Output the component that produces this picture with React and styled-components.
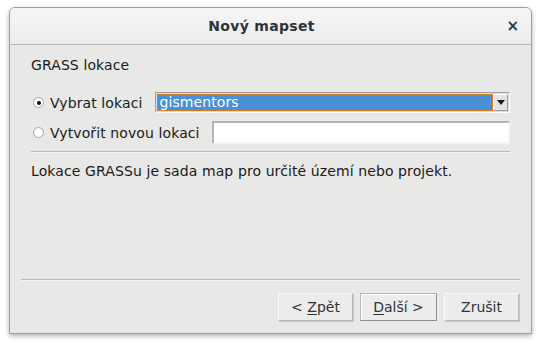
import React from "react";
import styled, { createGlobalStyle } from "styled-components";

const Global = createGlobalStyle`
  html, body {
    margin: 0;
    padding: 0;
    background: #ffffff;
  }
  body {
    font-family: "DejaVu Sans", "Liberation Sans", sans-serif;
    font-size: 14px;
    color: #2e3436;
  }
`;

const Page = styled.div`
  width: 542px;
  height: 344px;
  padding: 7px 0 0 9px;
  box-sizing: border-box;
`;

const Window = styled.div`
  width: 523px;
  height: 327px;
  box-sizing: border-box;
  border: 1px solid #9e9e9e;
  border-radius: 6px 6px 0 0;
  background: #e8e8e7;
  box-shadow: 0 2px 5px rgba(0, 0, 0, 0.3);
  display: flex;
  flex-direction: column;
  overflow: hidden;
`;

const TitleBar = styled.div`
  height: 36px;
  flex: none;
  display: flex;
  align-items: center;
  justify-content: center;
  position: relative;
  background: linear-gradient(#f6f6f6, #ececec);
  border-bottom: 1px solid #b6b6b3;
`;

const Title = styled.div`
  font-weight: bold;
  font-size: 14px;
  color: #2e3436;
  letter-spacing: 0.3px;
  margin-right: 18px;
`;

const Close = styled.div`
  position: absolute;
  right: 12px;
  top: 10px;
  font-size: 15px;
  font-weight: bold;
  color: #2e3436;
  line-height: 16px;
`;

const Body = styled.div`
  flex: 1;
  display: flex;
  flex-direction: column;
`;

const Content = styled.div`
  flex: 1;
  padding: 12px 21px 0 21px;
  display: flex;
  flex-direction: column;
  letter-spacing: 0.1px;
`;

const Heading = styled.div`
  line-height: 16px;
  color: #1a1a1a;
`;

const Options = styled.div`
  margin-top: 19px;
  padding-left: 2px;
  display: flex;
  flex-direction: column;
  gap: 8px;
`;

const OptionRow = styled.div`
  display: flex;
  align-items: center;
`;

const RadioLabel = styled.label`
  display: flex;
  align-items: center;
  gap: 6px;
  margin-right: ${(p) => p.$gap}px;
  color: #1a1a1a;
  white-space: nowrap;
`;

const Radio = styled.span`
  width: 9px;
  height: 9px;
  border-radius: 50%;
  border: 1px solid #a5a5a5;
  background: #ffffff;
  display: flex;
  align-items: center;
  justify-content: center;

  &::after {
    content: "";
    width: 4px;
    height: 4px;
    border-radius: 50%;
    background: ${(p) => (p.$checked ? "#111" : "transparent")};
  }
`;

const Combo = styled.div`
  flex: 1;
  height: 21px;
  box-sizing: border-box;
  border: 1px solid;
  border-color: #a0a0a0 #ffffff #ffffff #a0a0a0;
  background: #dcdcdc;
  display: flex;
  padding: 1px;
`;

const ComboValue = styled.div`
  flex: 1;
  background: #4a90d9;
  color: #ffffff;
  outline: 1px dotted #e08a2c;
  outline-offset: -1px;
  line-height: 17px;
  padding-left: 2px;
`;

const ComboButton = styled.div`
  width: 15px;
  box-sizing: border-box;
  border: 1px solid;
  border-color: #ffffff #9a9a9a #9a9a9a #ffffff;
  background: #e4e4e4;
  display: flex;
  align-items: center;
  justify-content: center;
`;

const Entry = styled.div`
  flex: 1;
  height: 23px;
  box-sizing: border-box;
  border: 2px solid;
  border-color: #b4b4b4 #f4f4f4 #f4f4f4 #b4b4b4;
  background: #ffffff;
`;

const Separator = styled.div`
  height: 1px;
  background: #b9b9b9;
  border-bottom: 1px solid #f6f6f6;
  margin: ${(p) => p.$margin};
`;

const Description = styled.div`
  line-height: 16px;
  color: #1a1a1a;
`;

const Footer = styled.div`
  flex: none;
  padding: 0 11px 12px 11px;
`;

const Buttons = styled.div`
  display: flex;
  justify-content: flex-end;
  gap: 7px;
  padding-right: 1px;
`;

const Button = styled.button`
  font-family: inherit;
  font-size: 14px;
  color: #2e3436;
  height: 28px;
  min-width: ${(p) => p.$width}px;
  box-sizing: border-box;
  background: #ececec;
  border: 1px solid;
  border-color: ${(p) =>
    p.$default ? "#b8b8b8 #8e8e8e #8e8e8e #b8b8b8" : "#fafafa #b9b9b9 #b9b9b9 #fafafa"};
  box-shadow: ${(p) => (p.$default ? "inset 1px 1px 0 #ffffff" : "1px 1px 0 #c8c8c8")};
  padding: 0 10px;

  u {
    text-decoration: underline;
    text-underline-offset: 2px;
  }
`;

export default function App() {
  return (
    <>
      <Global />
      <Page>
        <Window>
          <TitleBar>
            <Title>Nový mapset</Title>
            <Close>×</Close>
          </TitleBar>
          <Body>
            <Content>
              <Heading>GRASS lokace</Heading>
              <Options>
                <OptionRow>
                  <RadioLabel $gap={13}>
                    <Radio $checked />
                    Vybrat lokaci
                  </RadioLabel>
                  <Combo>
                    <ComboValue>gismentors</ComboValue>
                    <ComboButton>
                      <svg width="8" height="5" viewBox="0 0 8 5">
                        <path d="M0 0 H8 L4 5 Z" fill="#1a1a1a" />
                      </svg>
                    </ComboButton>
                  </Combo>
                </OptionRow>
                <OptionRow>
                  <RadioLabel $gap={12}>
                    <Radio />
                    Vytvořit novou lokaci
                  </RadioLabel>
                  <Entry />
                </OptionRow>
              </Options>
              <Separator $margin="7px 0 10px 0" />
              <Description>
                Lokace GRASSu je sada map pro určité území nebo projekt.
              </Description>
            </Content>
            <Footer>
              <Separator $margin="0 0 12px 0" />
              <Buttons>
                <Button $width={75}>
                  &lt; <u>Z</u>pět
                </Button>
                <Button $width={77} $default>
                  <u>D</u>alší &gt;
                </Button>
                <Button $width={75}>Zrušit</Button>
              </Buttons>
            </Footer>
          </Body>
        </Window>
      </Page>
    </>
  );
}
